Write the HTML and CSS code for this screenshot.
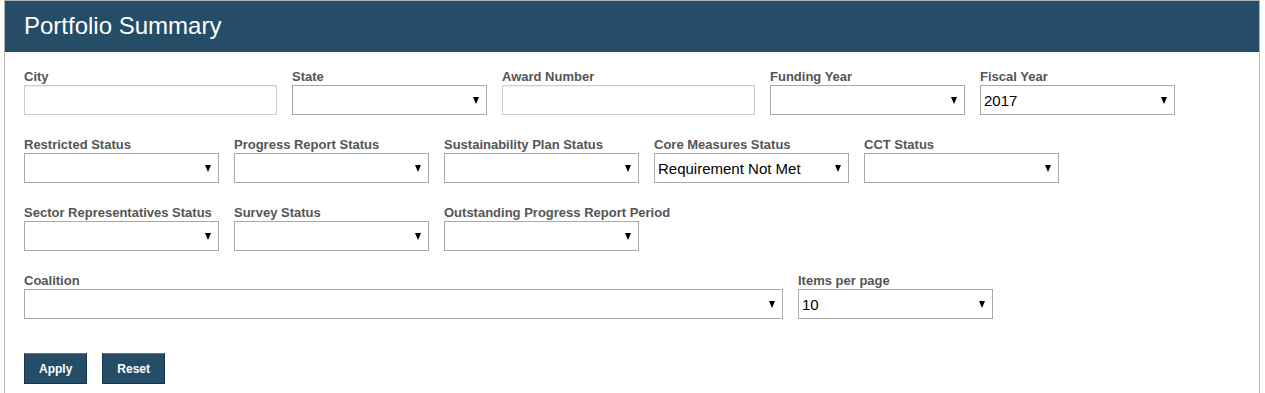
FILE: index.html
```html
<!DOCTYPE html>
<html lang="en">
<head>
    <meta charset="UTF-8">
    <meta name="viewport" content="width=device-width, initial-scale=1.0">
    <title>Portfolio Summary</title>
    <link rel="stylesheet" href="styles.css">
</head>
<body>
    <div class="panel">
        <header class="panel-head">
            <h1>Portfolio Summary</h1>
        </header>

        <form class="filters" onsubmit="return false;">
            <!-- Row 1 -->
            <div class="row">
                <div class="field">
                    <label for="city">City</label>
                    <input type="text" id="city" class="text-box">
                </div>
                <div class="field">
                    <label for="state">State</label>
                    <span class="pick"><select id="state"><option></option></select></span>
                </div>
                <div class="field">
                    <label for="award">Award Number</label>
                    <input type="text" id="award" class="text-box">
                </div>
                <div class="field">
                    <label for="fundYear">Funding Year</label>
                    <span class="pick"><select id="fundYear"><option></option></select></span>
                </div>
                <div class="field">
                    <label for="fiscalYear">Fiscal Year</label>
                    <span class="pick"><select id="fiscalYear"><option>2017</option></select></span>
                </div>
            </div>

            <!-- Row 2 -->
            <div class="row">
                <div class="field">
                    <label for="restricted">Restricted Status</label>
                    <span class="pick"><select id="restricted"><option></option></select></span>
                </div>
                <div class="field">
                    <label for="progress">Progress Report Status</label>
                    <span class="pick"><select id="progress"><option></option></select></span>
                </div>
                <div class="field">
                    <label for="sustain">Sustainability Plan Status</label>
                    <span class="pick"><select id="sustain"><option></option></select></span>
                </div>
                <div class="field">
                    <label for="core">Core Measures Status</label>
                    <span class="pick"><select id="core"><option>Requirement Not Met</option></select></span>
                </div>
                <div class="field">
                    <label for="cct">CCT Status</label>
                    <span class="pick"><select id="cct"><option></option></select></span>
                </div>
            </div>

            <!-- Row 3 -->
            <div class="row">
                <div class="field">
                    <label for="sector">Sector Representatives Status</label>
                    <span class="pick"><select id="sector"><option></option></select></span>
                </div>
                <div class="field">
                    <label for="survey">Survey Status</label>
                    <span class="pick"><select id="survey"><option></option></select></span>
                </div>
                <div class="field">
                    <label for="outstanding">Outstanding Progress Report Period</label>
                    <span class="pick"><select id="outstanding"><option></option></select></span>
                </div>
            </div>

            <!-- Row 4 -->
            <div class="row">
                <div class="field wide">
                    <label for="coalition">Coalition</label>
                    <span class="pick"><select id="coalition"><option></option></select></span>
                </div>
                <div class="field">
                    <label for="perPage">Items per page</label>
                    <span class="pick"><select id="perPage"><option>10</option></select></span>
                </div>
            </div>

            <div class="actions">
                <button type="submit" class="btn">Apply</button>
                <button type="reset" class="btn">Reset</button>
            </div>
        </form>
    </div>
</body>
</html>
```

FILE: styles.css
```css
body {
    font-family: Arial, "Liberation Sans", sans-serif;
    background: #fff;
    margin: 0;
    padding: 0;
}
.panel {
    margin-left: 4px;
    width: 1254px;
    height: 400px;
    border: 1px solid #b5b5b5;
    border-bottom: none;
}
.panel-head {
    background: #264d68;
    height: 51px;
    padding-left: 19px;
    display: flex;
    align-items: center;
}
.panel-head h1 {
    margin: 0;
    color: #fff;
    font-size: 24px;
    font-weight: normal;
    padding-bottom: 2px;
}
.filters {
    padding: 17px 19px 0;
}
.row {
    display: flex;
    gap: 15px;
    margin-bottom: 22px;
}
.field {
    display: flex;
    flex-direction: column;
}
.field label {
    font-size: 13px;
    font-weight: bold;
    color: #555;
    line-height: 15px;
    height: 16px;
}
.text-box {
    width: 253px;
    height: 30px;
    box-sizing: border-box;
    border: 1px solid #ccc;
    box-shadow: inset 0 1px 1px rgba(0, 0, 0, 0.05);
    margin: 0;
    padding: 3px;
    font-size: 15px;
}
.pick {
    position: relative;
    display: block;
    width: 195px;
    height: 30px;
}
.wide .pick {
    width: 759px;
}
.pick select {
    appearance: none;
    -webkit-appearance: none;
    width: 100%;
    height: 100%;
    box-sizing: border-box;
    border: 1px solid #a9a9a9;
    border-radius: 0;
    background: #fff;
    margin: 0;
    padding: 0 20px 0 3px;
    font-family: Arial, "Liberation Sans", sans-serif;
    font-size: 15px;
    color: #000;
}
.pick::after {
    content: "";
    position: absolute;
    right: 8px;
    top: 12px;
    border-left: 3.5px solid transparent;
    border-right: 3.5px solid transparent;
    border-top: 7px solid #000;
    pointer-events: none;
}
.actions {
    display: flex;
    gap: 15px;
    margin-top: 34px;
}
.btn {
    height: 31px;
    padding: 0 14px;
    background: #264d68;
    border: 1px solid #1b3548;
    border-top-color: #5a7a90;
    color: #fff;
    font-family: Arial, "Liberation Sans", sans-serif;
    font-size: 12px;
    font-weight: bold;
    cursor: pointer;
}
.btn:hover {
    background: #1e3f56;
}
```
